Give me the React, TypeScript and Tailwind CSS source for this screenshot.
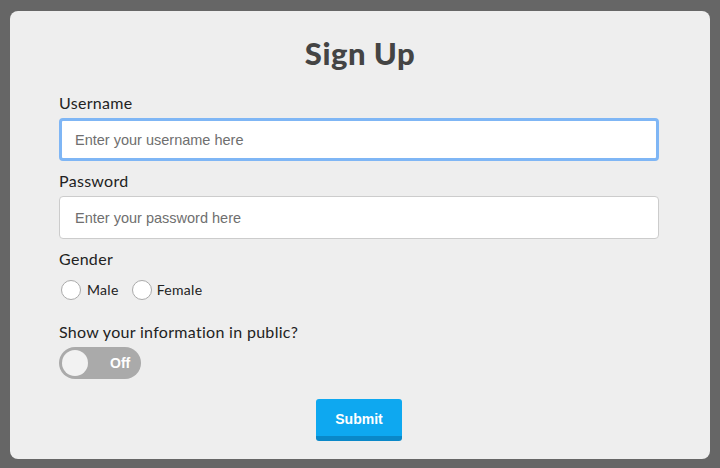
import React from "react";

export default function App() {
  const label = "text-[16px] leading-[18px] tracking-[0.3px] text-[#222222]";
  return (
    <div className="w-[720px] h-[468px] bg-[#666666] pt-[11px] px-[10px] pb-[9px]" style={{ fontFamily: "Lato, 'Noto Sans', sans-serif" }}>
      <div className="w-[700px] h-[448px] bg-[#eeeeee] rounded-[8px] px-[49px] pt-[22px] flex flex-col">
        <h1 className="text-center text-[31px] leading-[40px] font-black text-[#444444] tracking-[0.5px]">Sign Up</h1>
        <label className={"mt-[21px] " + label}>Username</label>
        <input
          className="mt-[6px] h-[43px] w-[600px] bg-white border-[3px] border-[#7fb6f5] rounded-[4px] px-[13px] text-[14.5px] outline-none placeholder:text-[#6f6f6f]"
          style={{ fontFamily: "'Liberation Sans', Arial, sans-serif" }}
          placeholder="Enter your username here"
        />
        <label className={"mt-[11px] " + label}>Password</label>
        <input
          className="mt-[6px] h-[43px] w-[600px] bg-white border border-[#cccccc] rounded-[4px] px-[15px] text-[14.5px] outline-none placeholder:text-[#6f6f6f]"
          style={{ fontFamily: "'Liberation Sans', Arial, sans-serif" }}
          placeholder="Enter your password here"
          type="password"
        />
        <label className={"mt-[11px] " + label}>Gender</label>
        <div className="mt-[11px] flex items-center ml-[2px] text-[14px] tracking-[0.3px] text-[#222222]">
          <span className="w-[20px] h-[20px] rounded-full bg-white border border-[#aaaaaa]"></span>
          <span className="ml-[6px]">Male</span>
          <span className="ml-[13px] w-[20px] h-[20px] rounded-full bg-white border border-[#aaaaaa]"></span>
          <span className="ml-[5px]">Female</span>
        </div>
        <label className={"mt-[23px] " + label}>Show your information in public?</label>
        <div className="mt-[6px] w-[82px] h-[32px] rounded-full bg-[#aaaaaa] flex items-center px-[3px]">
          <span className="w-[26px] h-[26px] rounded-full bg-[#f2f2f2]"></span>
          <span className="ml-[22px] text-white font-bold text-[14px]" style={{ fontFamily: "'Liberation Sans', Arial, sans-serif" }}>Off</span>
        </div>
        <div className="mt-[20px] flex justify-center">
          <button
            className="w-[86px] h-[42px] bg-[#0ea8f0] border-b-[5px] border-[#0a88c8] rounded-[3px] text-white font-bold text-[14px] pt-[3px] -ml-[2px]"
            style={{ fontFamily: "'Liberation Sans', Arial, sans-serif" }}
          >
            Submit
          </button>
        </div>
      </div>
    </div>
  );
}
